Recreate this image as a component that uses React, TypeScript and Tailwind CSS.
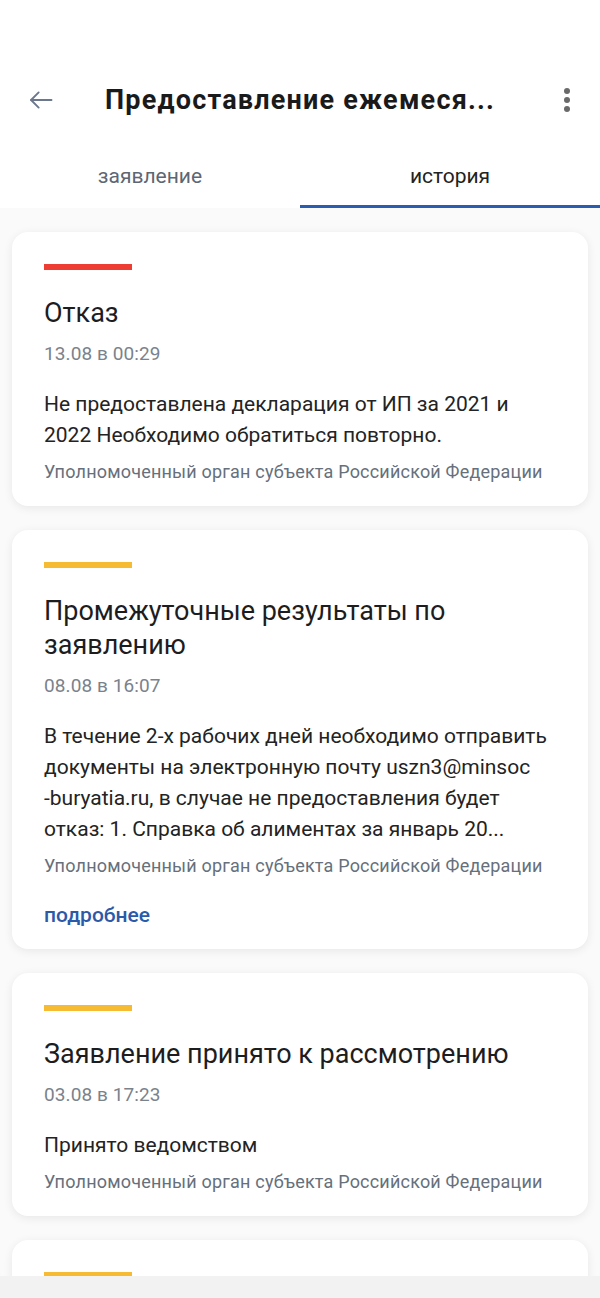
import React from "react";

const font = { fontFamily: "Roboto, 'Noto Sans', Arial, sans-serif" };

type CardProps = {
  color: string;
  title: React.ReactNode;
  date: string;
  body: React.ReactNode;
  more?: boolean;
};

function Card({ color, title, date, body, more }: CardProps) {
  return (
    <div className="mx-3 rounded-2xl bg-white px-8 pt-8 pb-[22px] shadow-[0_2px_10px_rgba(0,0,0,0.08)]">
      <div className={`h-[6px] w-[88px] ${color}`} />
      <div className="mt-[26px] text-[27px] leading-[34px] text-[#1d1d1f]">{title}</div>
      <div className="mt-3 text-[19px] leading-6 tracking-[0.1px] text-[#7a828c]">{date}</div>
      <div className="mt-[23px] text-[21px] leading-[31px] text-[#232323]">{body}</div>
      <div className="mt-[9px] text-[18px] leading-6 tracking-[0.2px] text-[#66707c]">
        Уполномоченный орган субъекта Российской Федерации
      </div>
      {more && (
        <div className="mt-[25px] text-[21px] font-medium leading-6 text-[#2a5aa8]">подробнее</div>
      )}
    </div>
  );
}

export default function App() {
  return (
    <div className="flex h-[1298px] w-[600px] flex-col overflow-hidden bg-[#fafafa]" style={font}>
      <div className="bg-white">
        <div className="h-[72px]" />
        <div className="flex h-14 items-center">
          <div className="flex w-[82px] items-center justify-center">
            <svg width="28" height="28" viewBox="0 0 24 24" fill="none" stroke="#6b778c" strokeWidth="1.6" strokeLinecap="round" strokeLinejoin="round">
              <path d="M21 12H3.5" />
              <path d="M10 5.5L3.5 12L10 18.5" />
            </svg>
          </div>
          <div className="ml-[23px] flex-1 text-[27px] font-bold tracking-[1.2px] text-[#1a1a1a]">Предоставление ежемеся...</div>
          <div className="flex w-[66px] flex-col items-center justify-center gap-[3px]">
            <span className="h-[6px] w-[6px] rounded-full bg-[#6a6a6a]" />
            <span className="h-[6px] w-[6px] rounded-full bg-[#6a6a6a]" />
            <span className="h-[6px] w-[6px] rounded-full bg-[#6a6a6a]" />
          </div>
        </div>
        <div className="mt-4 flex">
          <div className="flex h-16 flex-1 flex-col">
            <div className="flex flex-1 items-center justify-center pt-1 text-[21px] text-[#5d6673]">заявление</div>
            <div className="h-[3px]" />
          </div>
          <div className="flex h-16 flex-1 flex-col">
            <div className="flex flex-1 items-center justify-center pt-1 text-[21px] text-[#222]">история</div>
            <div className="h-[3px] bg-[#2a5cb0]" />
          </div>
        </div>
      </div>
      <div className="flex flex-1 flex-col gap-6 overflow-hidden pt-6">
        <Card
          color="bg-[#ee3e33]"
          title="Отказ"
          date="13.08 в 00:29"
          body={
            <>
              Не предоставлена декларация от ИП за 2021 и
              <br />
              2022 Необходимо обратиться повторно.
            </>
          }
        />
        <Card
          color="bg-[#f7bb33]"
          title={
            <>
              Промежуточные результаты по
              <br />
              заявлению
            </>
          }
          date="08.08 в 16:07"
          body={
            <>
              В течение 2-х рабочих дней необходимо отправить
              <br />
              документы на электронную почту uszn3@minsoc
              <br />
              -buryatia.ru, в случае не предоставления будет
              <br />
              отказ: 1. Справка об алиментах за январь 20...
            </>
          }
          more
        />
        <Card
          color="bg-[#f7bb33]"
          title="Заявление принято к рассмотрению"
          date="03.08 в 17:23"
          body="Принято ведомством"
        />
        <div className="mx-3 h-[200px] shrink-0 rounded-2xl bg-white px-8 pt-8 shadow-[0_2px_10px_rgba(0,0,0,0.08)]">
          <div className="h-[6px] w-[88px] bg-[#f7bb33]" />
        </div>
      </div>
      <div className="h-[22px] shrink-0 bg-[#f2f2f2]" />
    </div>
  );
}
